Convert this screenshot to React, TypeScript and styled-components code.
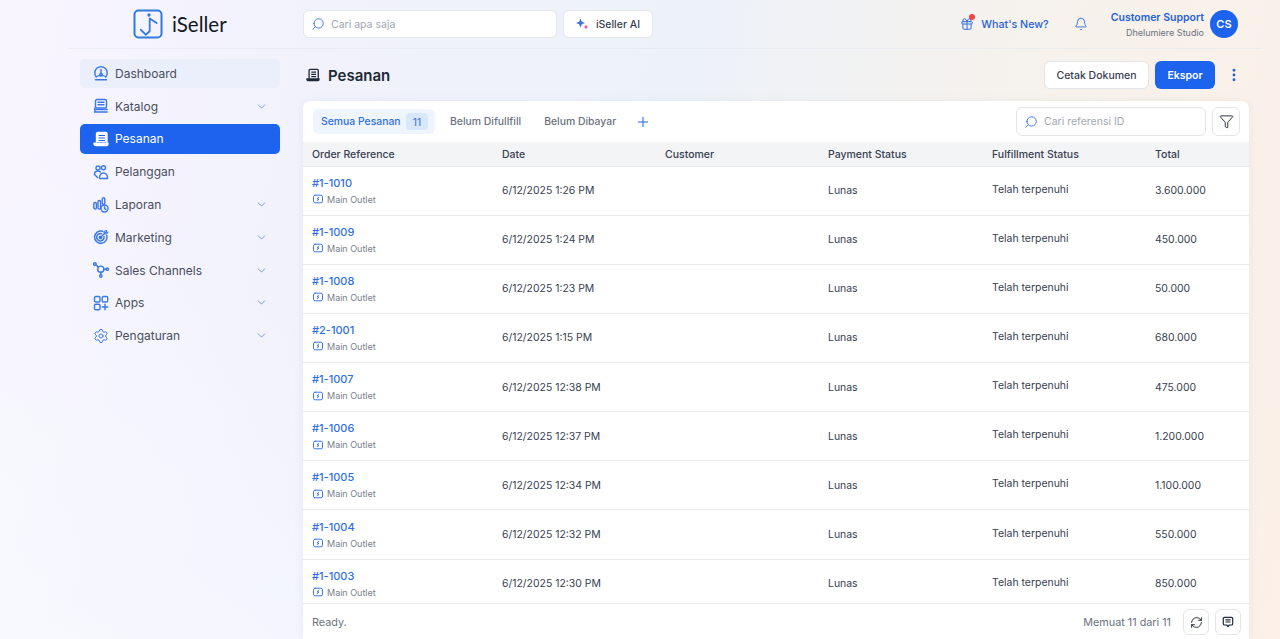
import React from 'react'
import styled, { createGlobalStyle } from 'styled-components'
import { Bell, ChevronDown, EllipsisVertical, Funnel, Gift, Plus, RefreshCw, Search, Settings } from 'lucide-react'

const GlobalStyle = createGlobalStyle`
  html, body, #root {
    margin: 0;
    height: 100%;
  }
  body {
    font-family: Inter, "Liberation Sans", sans-serif;
    color: #1f2937;
    overflow: hidden;
  }
  * { box-sizing: border-box; }
`

const Page = styled.div`
  height: 100vh;
  display: flex;
  flex-direction: column;
  overflow: hidden;
  background:
    linear-gradient(35deg, rgba(248, 250, 255, 0.8) 0%, rgba(248, 250, 255, 0) 35%),
    linear-gradient(100deg, #f9f5ff 0%, #f1f2fc 24%, #edf2f9 50%, #f6f2ed 74%, #fcf0e8 100%);
`

const Header = styled.header`
  height: 49px;
  flex: none;
  margin: 0 18px 0 68px;
  padding-right: 24px;
  display: flex;
  align-items: center;
  border-bottom: 1px solid rgba(226, 232, 240, 0.6);
`

const LogoBlock = styled.div`
  width: 235px;
  padding-left: 65px;
  display: flex;
  align-items: center;
  gap: 9px;
`

const LogoText = styled.span`
  font-family: Lato, sans-serif;
  font-size: 20.5px;
  line-height: 28px;
  color: #111827;
`

const SearchBox = styled.div<{ $width: number; $height: number }>`
  width: ${p => p.$width}px;
  height: ${p => p.$height}px;
  display: flex;
  align-items: center;
  gap: 6px;
  padding-left: 7px;
  background: #fff;
  border: 1px solid #e2e5ea;
  border-radius: 6px;
  font-size: 10.5px;
  color: #a3a8b1;
  svg {
    color: #2f6fe4;
    transform: scaleX(-1);
  }
`

const AiButton = styled.button`
  width: 90px;
  height: 28px;
  margin-left: 6px;
  display: flex;
  align-items: center;
  justify-content: center;
  gap: 7px;
  padding: 0;
  background: #fff;
  border: 1px solid #e2e5ea;
  border-radius: 6px;
  font: 500 10.5px Inter, sans-serif;
  color: #374151;
`

const HeaderRight = styled.div`
  margin-left: auto;
  display: flex;
  align-items: center;
`

const WhatsNew = styled.div`
  position: relative;
  display: flex;
  align-items: center;
  gap: 7px;
  font-size: 10.7px;
  font-weight: 500;
  color: #2563d9;
  svg { color: #2f6fe4; }
`

const RedDot = styled.span`
  position: absolute;
  left: 9px;
  top: -3px;
  width: 6px;
  height: 6px;
  border-radius: 50%;
  background: #ef4444;
`

const BellWrap = styled.div`
  margin: 0 23px 0 25px;
  display: flex;
  color: #2f6fe4;
`

const Account = styled.div`
  display: flex;
  flex-direction: column;
  align-items: flex-end;
  gap: 3px;
`

const AccountName = styled.span`
  font-size: 10.5px;
  line-height: 13px;
  font-weight: 600;
  color: #2563d9;
`

const AccountOrg = styled.span`
  font-size: 9px;
  line-height: 11px;
  color: #6b7280;
`

const Avatar = styled.div`
  width: 28px;
  height: 28px;
  margin-left: 6px;
  border-radius: 50%;
  background: #1d63ed;
  color: #fff;
  font-size: 11px;
  font-weight: 600;
  display: flex;
  align-items: center;
  justify-content: center;
`

const Body = styled.div`
  flex: 1;
  min-height: 0;
  display: flex;
`

const Sidebar = styled.nav`
  width: 303px;
  flex: none;
  padding: 9.5px 23px 0 80px;
  display: flex;
  flex-direction: column;
  gap: 3px;
`

const NavItem = styled.div<{ $state?: 'active' | 'soft' }>`
  height: 29.8px;
  display: flex;
  align-items: center;
  gap: 6px;
  padding: 0 12px 0 13px;
  border-radius: 5px;
  font-size: 12px;
  color: ${p => (p.$state === 'active' ? '#fff' : '#4a4f5e')};
  background: ${p => (p.$state === 'active' ? '#1d63ed' : p.$state === 'soft' ? '#ebeefb' : 'transparent')};
  svg.nav-icon { color: ${p => (p.$state === 'active' ? '#fff' : '#3b78e7')}; flex: none; }
`

const NavChevron = styled(ChevronDown)`
  margin-left: auto;
  color: #5482d8;
`

const Main = styled.main`
  width: 946px;
  flex: none;
  padding-top: 12px;
  display: flex;
  flex-direction: column;
  min-height: 0;
`

const TitleRow = styled.div`
  height: 28px;
  flex: none;
  display: flex;
  align-items: center;
  padding-left: 3px;
`

const PageTitle = styled.h1`
  margin: 0 0 0 8px;
  font-size: 15px;
  font-weight: 600;
  color: #1f2937;
`

const TitleActions = styled.div`
  margin-left: auto;
  display: flex;
  align-items: center;
  gap: 6px;
`

const OutlineButton = styled.button`
  width: 105px;
  height: 28px;
  padding: 0;
  background: #fff;
  border: 1px solid #e2e5ea;
  border-radius: 6px;
  font: 500 10.5px Inter, sans-serif;
  color: #374151;
`

const PrimaryButton = styled.button`
  width: 60px;
  height: 28px;
  padding: 0;
  background: #1d63ed;
  border: none;
  border-radius: 6px;
  font: 600 10.5px Inter, sans-serif;
  color: #fff;
`

const Kebab = styled.div`
  width: 28px;
  display: flex;
  justify-content: flex-end;
  padding-right: 7px;
  color: #2563d9;
`

const Card = styled.section`
  flex: 1;
  min-height: 0;
  margin-top: 12px;
  display: flex;
  flex-direction: column;
  background: #fff;
  border-radius: 8px 8px 0 0;
  box-shadow: 0 1px 8px rgba(100, 116, 139, 0.1);
`

const TabBar = styled.div`
  height: 41px;
  flex: none;
  display: flex;
  align-items: center;
  padding: 0 9px 0 10px;
`

const ActiveTab = styled.div`
  width: 122px;
  height: 25px;
  display: flex;
  align-items: center;
  justify-content: space-between;
  padding: 0 7px 0 8px;
  background: #eff5fd;
  border-radius: 6px;
  font-size: 10.4px;
  font-weight: 500;
  color: #2f6fe4;
`

const TabCount = styled.span`
  width: 22px;
  height: 17px;
  display: flex;
  align-items: center;
  justify-content: center;
  background: #d9e7fb;
  border-radius: 4px;
  font-size: 10px;
  color: #4b7fd8;
`

const Tab = styled.span`
  font-size: 10.4px;
  font-weight: 500;
  color: #6b7280;
  margin-left: 15px;
  & + & { margin-left: 23px; }
`

const AddTab = styled(Plus)`
  margin-left: 19px;
  color: #1d63ed;
`

const TabTools = styled.div`
  margin-left: auto;
  display: flex;
  align-items: center;
  gap: 6px;
`

const IconButton = styled.button<{ $size: number; $height: number }>`
  width: ${p => p.$size}px;
  height: ${p => p.$height}px;
  padding: 0;
  display: flex;
  align-items: center;
  justify-content: center;
  background: #fff;
  border: 1px solid #e2e5ea;
  border-radius: 6px;
  color: #111827;
`

const columns = 'grid-template-columns: 190px 163px 163px 164px 163px 1fr;'

const HeadRow = styled.div`
  height: 24.5px;
  flex: none;
  display: grid;
  ${columns}
  align-items: center;
  padding: 1px 0 0 9px;
  background: #f3f4f6;
  border-bottom: 1px solid #e5e7eb;
  font-size: 10.5px;
  font-weight: 500;
  color: #374151;
`

const Rows = styled.div`
  flex: 1;
  min-height: 0;
  overflow: hidden;
`

const Row = styled.div`
  height: 49.15px;
  display: grid;
  ${columns}
  align-items: center;
  padding-left: 9px;
  border-bottom: 1px solid #e9ebef;
  font-size: 10.45px;
  color: #374151;
`

const RefCell = styled.div`
  display: flex;
  flex-direction: column;
  gap: 3px;
`

const RefLink = styled.span`
  font-size: 11px;
  line-height: 14px;
  font-weight: 500;
  color: #2f6fe4;
`

const Outlet = styled.span`
  display: flex;
  align-items: center;
  gap: 4px;
  font-size: 9px;
  line-height: 13px;
  color: #7b818c;
  svg { color: #3b78e7; margin-left: 1px; }
`

const FulfillCell = styled.span`
  margin-bottom: 3px;
`

const Footer = styled.footer`
  height: 36px;
  flex: none;
  display: flex;
  align-items: center;
  padding: 1px 8px 0 9px;
  border-top: 1px solid #e5e7eb;
  font-size: 10.8px;
  color: #6b7280;
`

const FooterTools = styled.div`
  margin-left: auto;
  display: flex;
  align-items: center;
  gap: 6px;
`

const LoadCount = styled.span`
  margin-right: 6px;
`

function LogoMark() {
  return (
    <svg width="30" height="30" viewBox="0 0 30 30" fill="none" stroke="#2f7be0" strokeWidth="2" strokeLinecap="round" strokeLinejoin="round">
      <rect x="1.5" y="1.5" width="27" height="27" rx="4" />
      <circle cx="16" cy="6" r="1.7" fill="#2f7be0" stroke="none" />
      <path d="M7.7 20.7l5 5 4-3.400V9.500l7 4.500" strokeWidth="1.800" />
    </svg>
  )
}

function AiSpark() {
  return (
    <svg width="13" height="13" viewBox="0 0 13 13">
      <path d="M4.5 0.5l1.3 3.2 3.2 1.3-3.2 1.3-1.3 3.2-1.3-3.2L0 5l3.2-1.3z" fill="#3f6fe0" />
      <path d="M10 6.5l.8 1.7 1.7.8-1.7.8-.8 1.7-.8-1.7-1.7-.8 1.7-.8z" fill="#e0559a" />
    </svg>
  )
}

const navSvg = {
  className: 'nav-icon',
  width: 16,
  height: 16,
  viewBox: '0 0 16 16',
  fill: 'none',
  stroke: 'currentColor',
  strokeWidth: 1.4,
  strokeLinecap: 'round' as const,
  strokeLinejoin: 'round' as const,
}

function DashboardIcon() {
  return (
    <svg {...navSvg}>
      <path d="M3.2 11.8a6.2 6.2 0 1 1 9.6 0" />
      <path d="M3.2 11.8c1.2-.9 2.9-1.4 4.8-1.4s3.6.5 4.8 1.4" />
      <circle cx="8" cy="9.8" r="1.3" />
      <path d="M8 8.5V4.5M2.5 14.7h11" />
    </svg>
  )
}

function KatalogIcon() {
  return (
    <svg {...navSvg}>
      <rect x="2.5" y="1.5" width="11" height="8.5" rx="1.5" />
      <path d="M5 4.3h6M5 6.8h6M1.8 11.5h12.4M1.8 14h12.4" />
      <path d="M1.8 10v4" />
    </svg>
  )
}

function PesananIcon() {
  return (
    <svg {...navSvg}>
      <path d="M3.5 11V2.8c0-.7.5-1.3 1.3-1.3h8c.7 0 1.2.5 1.2 1.3V11" fill="currentColor" />
      <path d="M6 4.5h5.5M6 7h5.5M6 9.5h5.5" stroke="#1d63ed" strokeWidth="1.1" />
      <path d="M1 12.2c0 1.3.9 2.3 2.2 2.3h10.3c.9 0 1.5-.8 1.5-2.3z" fill="currentColor" />
    </svg>
  )
}

function PageTitleIcon() {
  return (
    <svg width="14" height="14" viewBox="0 0 16 16" fill="none" stroke="#1f2937" strokeWidth="1.5" strokeLinejoin="round">
      <path d="M3.5 12V2.8c0-.7.5-1.3 1.3-1.3h8c.7 0 1.2.5 1.2 1.3V12" />
      <path d="M6 4.8h5.5M6 7.3h5.5M6 9.8h5.5" />
      <path d="M1 12.5c0 1.2.9 2 2.2 2h10.3c.9 0 1.5-.7 1.5-2z" fill="#1f2937" />
    </svg>
  )
}

function PelangganIcon() {
  return (
    <svg {...navSvg}>
      <circle cx="5" cy="4" r="2" />
      <circle cx="10.5" cy="3.8" r="2" />
      <path d="M1.5 10.5c0-2 1.5-3.5 3.5-3.5 1 0 1.8.3 2.4.9" />
      <path d="M1.5 10.5l3 3" />
      <path d="M6.5 14.5c-.3-3 1.3-5.5 4-5.5s4.3 2.5 4 5.5z" />
    </svg>
  )
}

function LaporanIcon() {
  return (
    <svg {...navSvg}>
      <rect x="0.8" y="5.5" width="2.6" height="6.5" rx="1.3" />
      <rect x="5" y="3.5" width="2.6" height="8.5" rx="1.3" />
      <rect x="9.2" y="0.8" width="2.6" height="6.5" rx="1.3" />
      <circle cx="11.5" cy="11.5" r="3.5" fill="#f3f4fd" />
      <path d="M11.5 9.8v1.8l1.3.8" />
    </svg>
  )
}

function MarketingIcon() {
  return (
    <svg {...navSvg} strokeWidth={1.5}>
      <path d="M13.8 6.5a6.2 6.2 0 1 1-4.3-4.3" />
      <path d="M11 7.5a3.7 3.7 0 1 1-2.5-2.7" />
      <circle cx="7.5" cy="8.5" r="1.2" />
      <path d="M7.5 8.5L12.5 3.5M11 2.5V5h2.5L15 3.2h-1.5V1.500z" strokeWidth={1.1} />
    </svg>
  )
}

function ChannelsIcon() {
  return (
    <svg {...navSvg}>
      <circle cx="7.8" cy="7.2" r="3.1" />
      <circle cx="1.9" cy="2" r="1.3" />
      <circle cx="14.3" cy="7.2" r="1.2" />
      <circle cx="7.8" cy="14" r="1.2" />
      <path d="M2.9 2.9l2.7 2.3M10.9 7.2h2.2M7.8 10.3v2.5" />
    </svg>
  )
}

function AppsIcon() {
  return (
    <svg {...navSvg}>
      <rect x="1.5" y="1.5" width="5.5" height="5.5" rx="1.3" />
      <rect x="9.2" y="1.5" width="5.5" height="5.5" rx="1.3" />
      <rect x="1.5" y="9.2" width="5.5" height="5.5" rx="1.3" />
      <path d="M12 9.2v5.6M9.2 12h5.6" />
    </svg>
  )
}

function OutletIcon() {
  return (
    <svg width="10" height="10" viewBox="0 0 10 10" fill="none" stroke="currentColor" strokeWidth="1" strokeLinecap="round">
      <rect x="0.5" y="1.2" width="9" height="7.6" rx="1.6" />
      <path d="M5.5 3.2L4.2 5h1.6L4.5 6.800" />
    </svg>
  )
}

function NoteIcon() {
  return (
    <svg width="12" height="12" viewBox="0 0 14 14" fill="none" stroke="#1f2937" strokeWidth="1.4" strokeLinecap="round" strokeLinejoin="round">
      <path d="M3 1.5h8c.8 0 1.5.7 1.5 1.5v6c0 .8-.7 1.5-1.5 1.5H8.500L7 12.300 5.500 10.500H3c-.8 0-1.500-.7-1.500-1.500V3c0-.8.700-1.500 1.500-1.500z" />
      <path d="M4.5 4.5h5M4.5 7h5" />
    </svg>
  )
}

const navItems = [
  { label: 'Dashboard', icon: <DashboardIcon />, state: 'soft' as const },
  { label: 'Katalog', icon: <KatalogIcon />, chevron: true },
  { label: 'Pesanan', icon: <PesananIcon />, state: 'active' as const },
  { label: 'Pelanggan', icon: <PelangganIcon /> },
  { label: 'Laporan', icon: <LaporanIcon />, chevron: true },
  { label: 'Marketing', icon: <MarketingIcon />, chevron: true },
  { label: 'Sales Channels', icon: <ChannelsIcon />, chevron: true },
  { label: 'Apps', icon: <AppsIcon />, chevron: true },
  { label: 'Pengaturan', icon: <Settings className="nav-icon" size={16} strokeWidth={1.5} />, chevron: true },
]

const orders = [
  { ref: '#1-1010', date: '6/12/2025 1:26 PM', total: '3.600.000' },
  { ref: '#1-1009', date: '6/12/2025 1:24 PM', total: '450.000' },
  { ref: '#1-1008', date: '6/12/2025 1:23 PM', total: '50.000' },
  { ref: '#2-1001', date: '6/12/2025 1:15 PM', total: '680.000' },
  { ref: '#1-1007', date: '6/12/2025 12:38 PM', total: '475.000' },
  { ref: '#1-1006', date: '6/12/2025 12:37 PM', total: '1.200.000' },
  { ref: '#1-1005', date: '6/12/2025 12:34 PM', total: '1.100.000' },
  { ref: '#1-1004', date: '6/12/2025 12:32 PM', total: '550.000' },
  { ref: '#1-1003', date: '6/12/2025 12:30 PM', total: '850.000' },
]

export default function App() {
  return (
    <Page>
      <GlobalStyle />
      <Header>
        <LogoBlock>
          <LogoMark />
          <LogoText>iSeller</LogoText>
        </LogoBlock>
        <SearchBox $width={254} $height={28}>
          <Search size={14} strokeWidth={1.5} />
          Cari apa saja
        </SearchBox>
        <AiButton>
          <AiSpark />
          iSeller AI
        </AiButton>
        <HeaderRight>
          <WhatsNew>
            <Gift size={14} strokeWidth={1.7} />
            <RedDot />
            What's New?
          </WhatsNew>
          <BellWrap>
            <Bell size={14} strokeWidth={1.6} />
          </BellWrap>
          <Account>
            <AccountName>Customer Support</AccountName>
            <AccountOrg>Dhelumiere Studio</AccountOrg>
          </Account>
          <Avatar>CS</Avatar>
        </HeaderRight>
      </Header>
      <Body>
        <Sidebar>
          {navItems.map(item => (
            <NavItem key={item.label} $state={item.state}>
              {item.icon}
              {item.label}
              {item.chevron && <NavChevron size={13} strokeWidth={1.4} />}
            </NavItem>
          ))}
        </Sidebar>
        <Main>
          <TitleRow>
            <PageTitleIcon />
            <PageTitle>Pesanan</PageTitle>
            <TitleActions>
              <OutlineButton>Cetak Dokumen</OutlineButton>
              <PrimaryButton>Ekspor</PrimaryButton>
              <Kebab>
                <EllipsisVertical size={16} strokeWidth={2.4} />
              </Kebab>
            </TitleActions>
          </TitleRow>
          <Card>
            <TabBar>
              <ActiveTab>
                Semua Pesanan
                <TabCount>11</TabCount>
              </ActiveTab>
              <Tab>Belum Difullfill</Tab>
              <Tab>Belum Dibayar</Tab>
              <AddTab size={16} strokeWidth={1.5} />
              <TabTools>
                <SearchBox $width={190} $height={29}>
                  <Search size={14} strokeWidth={1.5} />
                  Cari referensi ID
                </SearchBox>
                <IconButton $size={28} $height={29}>
                  <Funnel size={15} strokeWidth={1.4} />
                </IconButton>
              </TabTools>
            </TabBar>
            <HeadRow>
              <span>Order Reference</span>
              <span>Date</span>
              <span>Customer</span>
              <span>Payment Status</span>
              <span>Fulfillment Status</span>
              <span>Total</span>
            </HeadRow>
            <Rows>
              {orders.map(order => (
                <Row key={order.ref}>
                  <RefCell>
                    <RefLink>{order.ref}</RefLink>
                    <Outlet>
                      <OutletIcon />
                      Main Outlet
                    </Outlet>
                  </RefCell>
                  <span>{order.date}</span>
                  <span />
                  <span>Lunas</span>
                  <FulfillCell>Telah terpenuhi</FulfillCell>
                  <span>{order.total}</span>
                </Row>
              ))}
            </Rows>
            <Footer>
              Ready.
              <FooterTools>
                <LoadCount>Memuat 11 dari 11</LoadCount>
                <IconButton $size={26} $height={26}>
                  <RefreshCw size={13} strokeWidth={1.6} />
                </IconButton>
                <IconButton $size={26} $height={26}>
                  <NoteIcon />
                </IconButton>
              </FooterTools>
            </Footer>
          </Card>
        </Main>
      </Body>
    </Page>
  )
}
